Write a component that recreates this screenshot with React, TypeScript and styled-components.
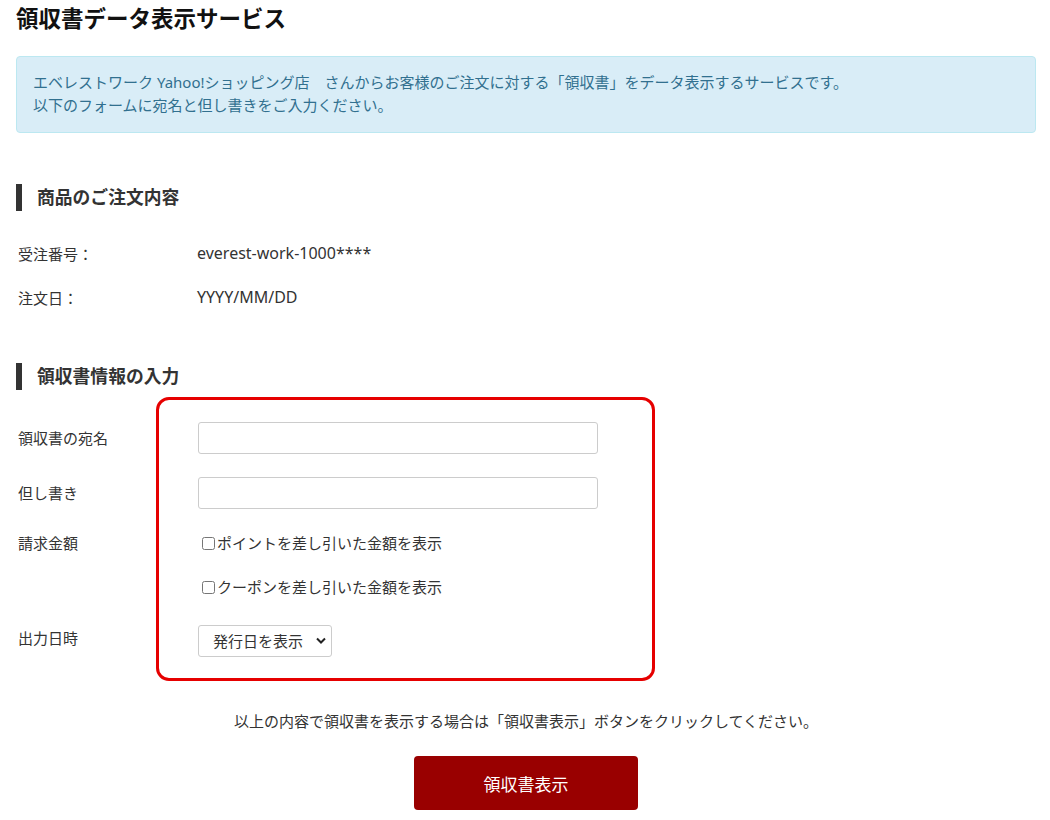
import React from "react";
import styled, { createGlobalStyle } from "styled-components";

const GlobalStyle = createGlobalStyle`
  html, body {
    margin: 0;
    padding: 0;
    background: #ffffff;
  }
  body {
    font-family: "Noto Sans", "Noto Sans CJK JP", sans-serif;
    color: #333333;
    font-size: 15px;
  }
  * { box-sizing: border-box; }
`;

const Page = styled.div`
  width: 1050px;
  padding: 4px 14px 0 16px;
`;

const Title = styled.h1`
  margin: 0;
  font-size: 22.5px;
  line-height: 30px;
  font-weight: 700;
  color: #111111;
`;

const Alert = styled.div`
  margin-top: 22px;
  background: #d9edf7;
  border: 1px solid #bce8f1;
  border-radius: 4px;
  color: #31708f;
  padding: 14px 16px 15px;
  font-size: 15px;
  line-height: 23px;
`;

const SectionHeading = styled.h2<{ $top: number }>`
  margin: ${(p) => p.$top}px 0 0;
  border-left: 6px solid #333333;
  padding-left: 15px;
  font-size: 17.8px;
  line-height: 27px;
  font-weight: 700;
  color: #333333;
`;

const InfoList = styled.dl`
  margin: 20px 0 0;
`;

const InfoRow = styled.div`
  display: grid;
  grid-template-columns: 181px 1fr;
  height: 44px;
  align-items: center;
`;

const InfoLabel = styled.dt`
  margin: 0;
  padding-left: 2px;
  font-size: 15px;
`;

const InfoValue = styled.dd`
  margin: 0;
  font-size: 16px;
`;

const Form = styled.form`
  position: relative;
  margin-top: 8px;
  padding: 24px 0;

  &::before {
    content: "";
    position: absolute;
    left: 140px;
    top: -1px;
    bottom: 0;
    width: 493px;
    border: 3px solid #e60000;
    border-radius: 13px;
    pointer-events: none;
  }
`;

const FormRow = styled.div<{ $top?: number; $align?: string }>`
  display: grid;
  grid-template-columns: 182px 400px;
  align-items: ${(p) => p.$align || "center"};
  margin-top: ${(p) => p.$top || 0}px;
`;

const FormLabel = styled.label<{ $pad?: number }>`
  padding-left: 2px;
  padding-top: ${(p) => p.$pad || 0}px;
  font-size: 15px;
  line-height: 22px;
`;

const TextInput = styled.input`
  width: 400px;
  height: 32px;
  border: 1px solid #cccccc;
  border-radius: 3px;
  padding: 4px 8px;
  font-size: 15px;
  font-family: inherit;
  color: #333333;
  background: #ffffff;
`;

const CheckGroup = styled.div`
  display: flex;
  flex-direction: column;
  gap: 22px;
`;

const CheckLabel = styled.label`
  display: flex;
  align-items: center;
  font-size: 15px;
  line-height: 22px;
  color: #333333;
`;

const Check = styled.input`
  width: 13px;
  height: 13px;
  margin: 0 2px 0 4px;
`;

const SelectWrap = styled.div`
  position: relative;
  width: 134px;
  height: 32px;
`;

const Select = styled.select`
  appearance: none;
  width: 134px;
  height: 32px;
  border: 1px solid #cccccc;
  border-radius: 3px;
  padding: 0 28px 0 14px;
  font-size: 15px;
  font-family: inherit;
  color: #333333;
  background: #ffffff;
`;

const Chevron = styled.svg`
  position: absolute;
  right: 6px;
  top: 12px;
  width: 10px;
  height: 7px;
  pointer-events: none;
`;

const Notice = styled.p`
  margin: 28px 0 0;
  text-align: center;
  font-size: 15px;
  line-height: 24px;
  color: #333333;
`;

const ButtonRow = styled.div`
  display: flex;
  justify-content: center;
  margin-top: 23px;
`;

const SubmitButton = styled.button`
  width: 224px;
  height: 54px;
  border: none;
  border-radius: 4px;
  background: #990000;
  color: #ffffff;
  font-size: 17px;
  font-family: inherit;
  cursor: pointer;
`;

export default function App() {
  return (
    <>
      <GlobalStyle />
      <Page>
        <Title>領収書データ表示サービス</Title>
        <Alert>
          エベレストワーク Yahoo!ショッピング店　さんからお客様のご注文に対する「領収書」をデータ表示するサービスです。
          <br />
          以下のフォームに宛名と但し書きをご入力ください。
        </Alert>

        <SectionHeading $top={51}>商品のご注文内容</SectionHeading>
        <InfoList>
          <InfoRow>
            <InfoLabel>受注番号：</InfoLabel>
            <InfoValue>everest-work-1000****</InfoValue>
          </InfoRow>
          <InfoRow>
            <InfoLabel>注文日：</InfoLabel>
            <InfoValue>YYYY/MM/DD</InfoValue>
          </InfoRow>
        </InfoList>

        <SectionHeading $top={44}>領収書情報の入力</SectionHeading>
        <Form onSubmit={(e) => e.preventDefault()}>
          <FormRow>
            <FormLabel>領収書の宛名</FormLabel>
            <TextInput type="text" />
          </FormRow>
          <FormRow $top={23}>
            <FormLabel>但し書き</FormLabel>
            <TextInput type="text" />
          </FormRow>
          <FormRow $top={23} $align="start">
            <FormLabel>請求金額</FormLabel>
            <CheckGroup>
              <CheckLabel>
                <Check type="checkbox" />
                ポイントを差し引いた金額を表示
              </CheckLabel>
              <CheckLabel>
                <Check type="checkbox" />
                クーポンを差し引いた金額を表示
              </CheckLabel>
            </CheckGroup>
          </FormRow>
          <FormRow $top={27} $align="start">
            <FormLabel $pad={2}>出力日時</FormLabel>
            <SelectWrap>
              <Select defaultValue="issue">
                <option value="issue">発行日を表示</option>
                <option value="order">注文日を表示</option>
              </Select>
              <Chevron viewBox="0 0 10 7">
                <path d="M1 1.5 L5 5.5 L9 1.5" fill="none" stroke="#222" strokeWidth="2" />
              </Chevron>
            </SelectWrap>
          </FormRow>
        </Form>

        <Notice>以上の内容で領収書を表示する場合は「領収書表示」ボタンをクリックしてください。</Notice>
        <ButtonRow>
          <SubmitButton type="button">領収書表示</SubmitButton>
        </ButtonRow>
      </Page>
    </>
  );
}
